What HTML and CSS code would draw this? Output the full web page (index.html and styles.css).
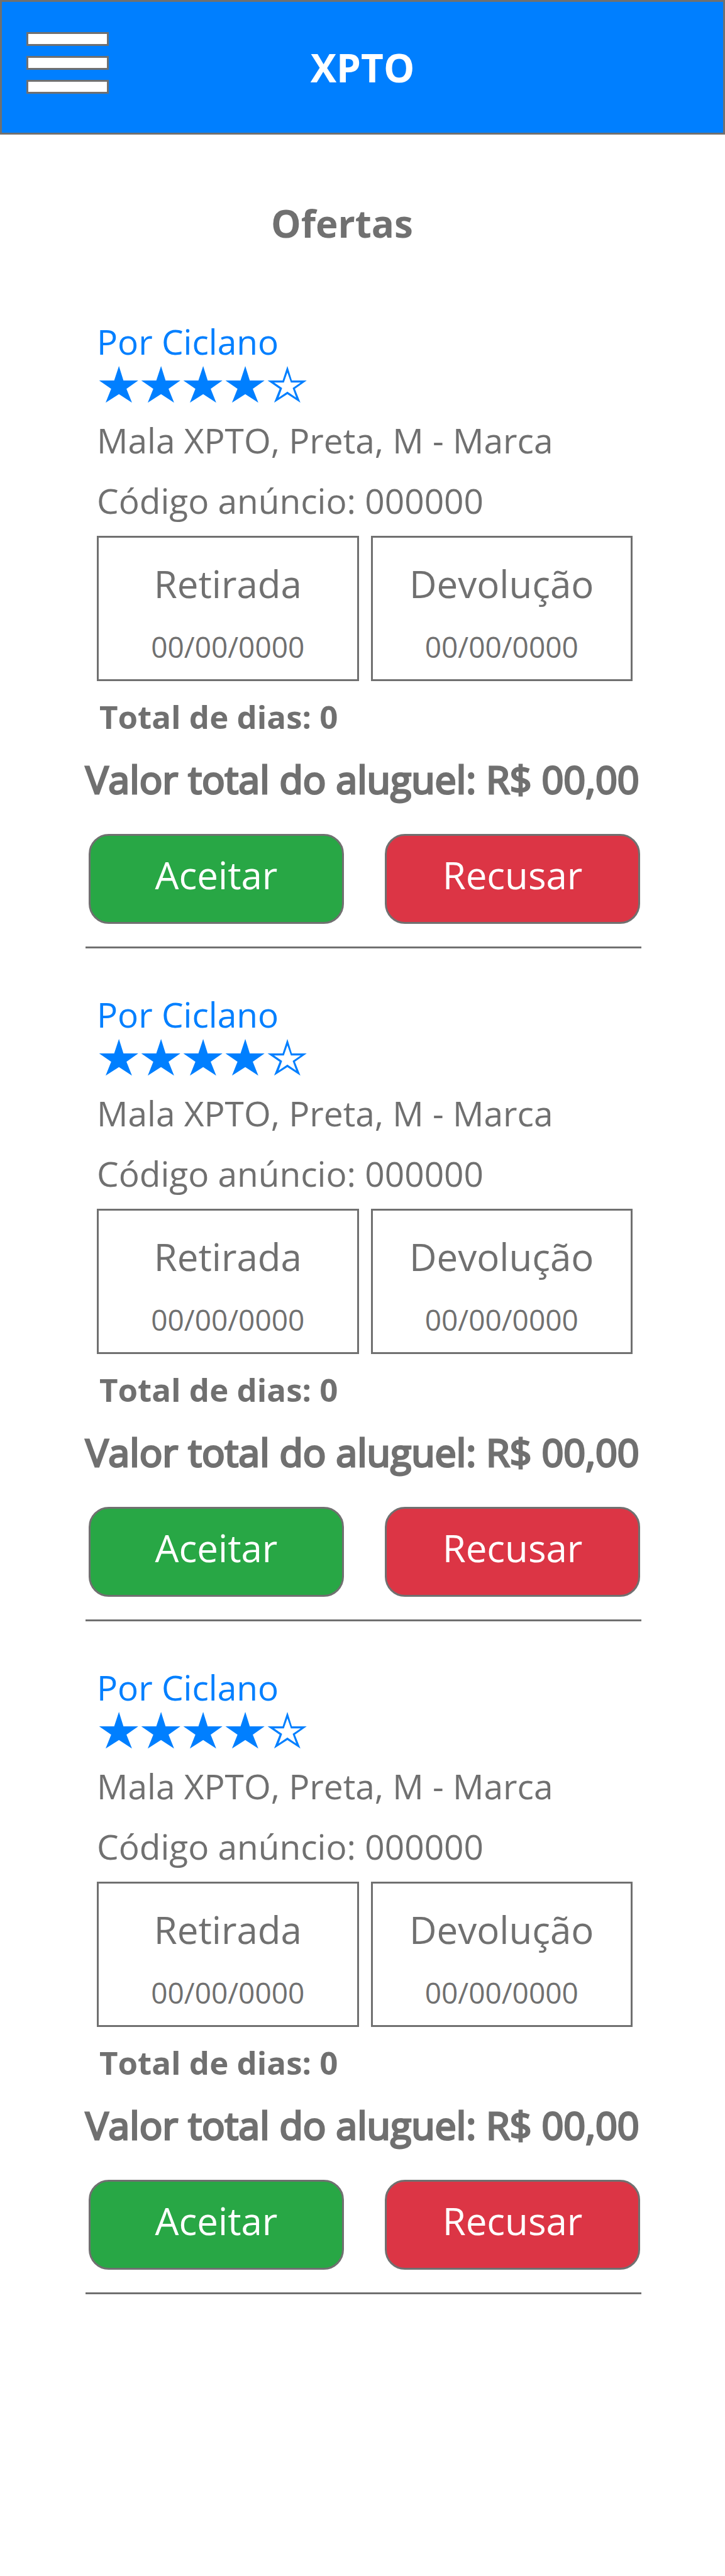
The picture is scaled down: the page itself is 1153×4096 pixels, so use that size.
FILE: index.html
```html
<!DOCTYPE html>
<html lang="pt-BR">
<head>
<meta charset="utf-8">
<meta name="viewport" content="width=device-width, initial-scale=1">
<title>XPTO - Ofertas</title>
<link rel="stylesheet" href="styles.css">
</head>
<body>
<header class="topbar">
  <button class="menu" type="button" aria-label="Menu"><span class="bar"></span><span class="bar"></span><span class="bar"></span></button>
  <p class="brand">XPTO</p>
</header>
<main class="page">
  <h1 class="title">Ofertas</h1>
  <article class="offer">
    <div class="details">
      <a class="author" href="#">Por Ciclano</a>
      <svg class="stars" viewBox="0 0 416 74" role="img" aria-label="4 de 5 estrelas">
        <defs><path id="star" d="M39.500 0L48.500 29H78L54.500 45.500L65.500 73L39.500 56L13 73L24 45.500L0 29H30Z"/></defs>
        <use href="#star"/><use href="#star" x="84"/><use href="#star" x="168"/><use href="#star" x="252"/>
        <path fill-rule="evenodd" d="M375.500 0L384.500 29H414L390.500 45.500L401.500 73L375.500 56L349 73L360 45.500L336 29H366ZM375.500 13L368.500 33H349L365 44L358 63L375.500 51L393 63L386 44L402 33H382.500Z"/>
      </svg>
      <p class="line">Mala XPTO, Preta, M - Marca</p>
      <p class="line">Código anúncio: 000000</p>
      <dl class="dates">
        <div class="date"><dt>Retirada</dt><dd>00/00/0000</dd></div>
        <div class="date"><dt>Devolução</dt><dd>00/00/0000</dd></div>
      </dl>
      <p class="days">Total de dias: 0</p>
    </div>
    <p class="total">Valor total do aluguel: R$ 00,00</p>
    <div class="actions"><button class="btn accept" type="button">Aceitar</button><button class="btn refuse" type="button">Recusar</button></div>
  </article>
  <article class="offer">
    <div class="details">
      <a class="author" href="#">Por Ciclano</a>
      <svg class="stars" viewBox="0 0 416 74" role="img" aria-label="4 de 5 estrelas">
        <use href="#star"/><use href="#star" x="84"/><use href="#star" x="168"/><use href="#star" x="252"/>
        <path fill-rule="evenodd" d="M375.500 0L384.500 29H414L390.500 45.500L401.500 73L375.500 56L349 73L360 45.500L336 29H366ZM375.500 13L368.500 33H349L365 44L358 63L375.500 51L393 63L386 44L402 33H382.500Z"/>
      </svg>
      <p class="line">Mala XPTO, Preta, M - Marca</p>
      <p class="line">Código anúncio: 000000</p>
      <dl class="dates">
        <div class="date"><dt>Retirada</dt><dd>00/00/0000</dd></div>
        <div class="date"><dt>Devolução</dt><dd>00/00/0000</dd></div>
      </dl>
      <p class="days">Total de dias: 0</p>
    </div>
    <p class="total">Valor total do aluguel: R$ 00,00</p>
    <div class="actions"><button class="btn accept" type="button">Aceitar</button><button class="btn refuse" type="button">Recusar</button></div>
  </article>
  <article class="offer">
    <div class="details">
      <a class="author" href="#">Por Ciclano</a>
      <svg class="stars" viewBox="0 0 416 74" role="img" aria-label="4 de 5 estrelas">
        <use href="#star"/><use href="#star" x="84"/><use href="#star" x="168"/><use href="#star" x="252"/>
        <path fill-rule="evenodd" d="M375.500 0L384.500 29H414L390.500 45.500L401.500 73L375.500 56L349 73L360 45.500L336 29H366ZM375.500 13L368.500 33H349L365 44L358 63L375.500 51L393 63L386 44L402 33H382.500Z"/>
      </svg>
      <p class="line">Mala XPTO, Preta, M - Marca</p>
      <p class="line">Código anúncio: 000000</p>
      <dl class="dates">
        <div class="date"><dt>Retirada</dt><dd>00/00/0000</dd></div>
        <div class="date"><dt>Devolução</dt><dd>00/00/0000</dd></div>
      </dl>
      <p class="days">Total de dias: 0</p>
    </div>
    <p class="total">Valor total do aluguel: R$ 00,00</p>
    <div class="actions"><button class="btn accept" type="button">Aceitar</button><button class="btn refuse" type="button">Recusar</button></div>
  </article>
</main>
</body>
</html>
```

FILE: styles.css
```css
* { box-sizing: border-box; margin: 0; padding: 0; }

body {
  background: #fff;
  color: #707070;
  font-family: "Open Sans", "Noto Sans", sans-serif;
  font-size: 55px;
  line-height: 96px;
}

.topbar {
  display: grid;
  grid-template-columns: 1fr auto 1fr;
  align-items: start;
  padding: 48px 39px;
  background: #007fff;
  border: 3px solid #707070;
}

.menu {
  display: flex;
  flex-direction: column;
  gap: 16px;
  width: 131px;
  background: none;
  border: 0;
  cursor: pointer;
}

.bar { height: 22px; background: #fff; border: 3px solid #707070; }

.brand { color: #fff; font-size: 62px; font-weight: 700; line-height: 112px; }

.page { padding: 96px 133px 448px 136px; }

.title {
  margin-bottom: 38px;
  padding-right: 68px;
  font-size: 60px;
  font-weight: 700;
  line-height: 90px;
  text-align: center;
}

.offer { padding: 69px 0 36px; border-bottom: 3px solid #707070; }

.details { display: flex; flex-direction: column; padding: 0 14px 0 18px; }

.author { align-self: flex-start; color: #007fff; line-height: 72px; text-decoration: none; }

.stars { width: 333px; height: 59px; margin: 3px 0 11px 3px; fill: #007fff; }

.line { white-space: nowrap; }

.dates { display: grid; grid-template-columns: 1fr 1fr; gap: 19px; margin: 8px 0; }

.date { padding-top: 25px; border: 3px solid #707070; text-align: center; }

.date dt { font-size: 60px; }

.date dd { font-size: 46px; line-height: 104px; }

.days { padding-left: 4px; font-size: 51px; font-weight: 700; }

.total { font-size: 61px; line-height: 104px; white-space: nowrap; -webkit-text-stroke: 3px #707070; }

.actions { display: grid; grid-template-columns: 1fr 1fr; gap: 65px; padding: 35px 2px 0 5px; }

.btn {
  padding: 14px 0 27px;
  border: 3px solid #707070;
  border-radius: 32px;
  color: #fff;
  font: inherit;
  font-size: 60px;
  cursor: pointer;
}

.accept { background: #28a745; }

.refuse { background: #dc3545; }
```
